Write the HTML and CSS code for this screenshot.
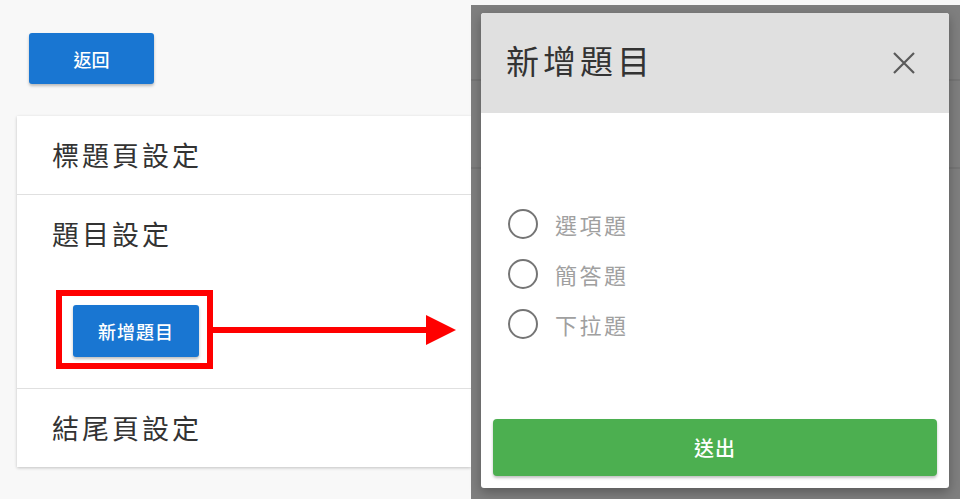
FILE: index.html
```html
<!DOCTYPE html>
<html lang="zh-Hant">
<head>
  <meta charset="UTF-8">
  <meta name="viewport" content="width=device-width, initial-scale=1.0">
  <title>新增題目</title>
  <link rel="stylesheet" href="styles.css">
</head>
<body>

  <div class="page">
    <button class="btn btn-blue back-btn">返回</button>

    <div class="card">
      <div class="card-row">
        <h2 class="row-title">標題頁設定</h2>
      </div>
      <div class="card-row">
        <h2 class="row-title">題目設定</h2>
        <div class="callout">
          <div class="highlight">
            <button class="btn btn-blue add-btn">新增題目</button>
          </div>
          <svg class="arrow" width="243" height="30" viewBox="0 0 243 30">
            <rect x="0" y="12" width="214" height="6" fill="#ff0000" />
            <polygon points="213,0 243,15 213,30" fill="#ff0000" />
          </svg>
        </div>
      </div>
      <div class="card-row">
        <h2 class="row-title">結尾頁設定</h2>
      </div>
    </div>
  </div>

  <div class="shot">
    <div class="dialog">
      <div class="dialog-header">
        <h3 class="dialog-title">新增題目</h3>
        <svg class="close" width="22" height="22" viewBox="0 0 22 22">
          <path d="M1 1 L21 21 M21 1 L1 21" stroke="#5a5a5a" stroke-width="2.2" fill="none" />
        </svg>
      </div>
      <div class="dialog-body">
        <div class="options">
          <label class="option"><span class="radio"></span>選項題</label>
          <label class="option"><span class="radio"></span>簡答題</label>
          <label class="option"><span class="radio"></span>下拉題</label>
        </div>
        <button class="btn btn-green">送出</button>
      </div>
    </div>
  </div>

</body>
</html>
```

FILE: styles.css
```css
body {
  margin: 0;
  display: flex;
  height: 499px;
  overflow: hidden;
  background-color: #f8f8f8;
  font-family: "Noto Sans CJK TC", "Noto Sans", sans-serif;
}

.page {
  width: 471px;
  flex-shrink: 0;
  padding: 33px 0 0 17px;
  box-sizing: border-box;
}

.btn {
  border: none;
  border-radius: 3px;
  color: #fff;
  font-family: inherit;
  font-size: 18px;
  font-weight: 500;
  cursor: pointer;
}

.btn-blue {
  background-color: #1976d2;
  box-shadow: 0 2px 3px rgba(0, 0, 0, 0.25);
}

.back-btn {
  width: 125px;
  height: 51px;
  margin-left: 12px;
}

.card {
  margin-top: 32px;
  background-color: #fff;
  box-shadow: 0 1px 3px rgba(0, 0, 0, 0.22);
}

.card-row {
  padding: 23px 0 23px 35px;
  border-bottom: 1px solid #e0e0e0;
}

.card-row:last-child {
  border-bottom: none;
}

.row-title {
  margin: 0;
  font-size: 27px;
  font-weight: 400;
  line-height: 32px;
  letter-spacing: 3px;
  color: #333;
}

.callout {
  display: flex;
  align-items: center;
  margin: 40px 0 -4px 4px;
}

.highlight {
  border: 6px solid #ff0000;
  padding: 9px 8px 6px 11px;
}

.add-btn {
  display: block;
  width: 126px;
  height: 52px;
  letter-spacing: 1px;
}

.arrow {
  display: block;
}

/* second screenshot: the dialog on a dimmed page */
.shot {
  width: 489px;
  height: 494px;
  margin-top: 5px;
  flex-shrink: 0;
  padding: 8px 11px 11px 10px;
  box-sizing: border-box;
  background-color: #7f7f7f;
  background-image:
    linear-gradient(#767676, #767676),
    linear-gradient(#767676, #767676);
  background-size: 100% 2px, 100% 2px;
  background-position: 0 74px, 0 162px;
  background-repeat: no-repeat;
}

.dialog {
  height: 100%;
  display: flex;
  flex-direction: column;
  background-color: #fff;
  border-radius: 3px;
  overflow: hidden;
  box-shadow: 0 4px 12px rgba(0, 0, 0, 0.3);
}

.dialog-header {
  height: 100px;
  flex-shrink: 0;
  display: flex;
  align-items: center;
  justify-content: space-between;
  padding: 0 34px 0 25px;
  background-color: #e0e0e0;
}

.dialog-title {
  margin: 0;
  font-size: 33px;
  font-weight: 400;
  line-height: 36px;
  letter-spacing: 4px;
  color: #333;
  margin-top: -6px;
}

.dialog-body {
  flex: 1;
  display: flex;
  flex-direction: column;
  padding: 86px 12px 12px;
}

.options {
  padding-left: 15px;
}

.option {
  display: flex;
  align-items: center;
  height: 50px;
  font-size: 22px;
  letter-spacing: 2.5px;
  color: #a0a0a0;
}

.radio {
  width: 26px;
  height: 26px;
  border: 2.5px solid #757575;
  border-radius: 50%;
  margin-right: 17px;
}

.btn-green {
  margin-top: auto;
  height: 57px;
  background-color: #4caf50;
  font-size: 20px;
  letter-spacing: 1px;
  border-radius: 4px;
  box-shadow: 0 2px 3px rgba(0, 0, 0, 0.25);
}
```
